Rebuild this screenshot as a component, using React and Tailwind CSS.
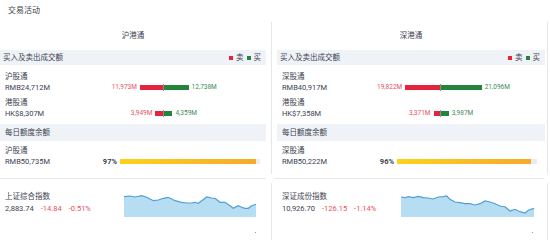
import React from 'react';

const leftLine = [[0,1.7],[6,1],[11,2],[17.7,0.7],[22.7,2.3],[29.3,5.7],[34.3,5],[39.3,3.3],[44.3,2.3],[47.7,4],[51,5.7],[57.7,7.3],[62.7,8],[67.7,8],[71,7.3],[74.3,8.3],[77.7,5.7],[82.7,2],[87.7,3],[91,3.3],[96,7.3],[101,7.3],[106,10.7],[109.3,13.3],[114.3,10.7],[117.7,12.3],[121,13.3],[124.3,13.3],[127.7,10.7],[132,9.3]];
const rightLine = [[0,2],[4,2.7],[7.3,1.7],[12.3,2.7],[17.3,1.3],[22.3,2.7],[27.3,3],[32.3,4],[37.3,2],[42.3,1.7],[45.7,1],[49,4.3],[54,7],[59,7.7],[64,8.7],[69,8.7],[74,10],[79,8.7],[84,6],[89,7],[94,8.7],[99,11],[104,11.7],[109,16],[114,14.3],[119,16.7],[124,18],[127.3,15.3],[133,13.3]];

const markets = [
    {
        name: '沪港通',
        north: { name: '沪股通', total: 'RMB24,712M', sell: 11973, buy: 12738 },
        south: { name: '港股通', total: 'HK$8,307M', sell: 3949, buy: 4359 },
        quota: { name: '沪股通', total: 'RMB50,735M', pct: 97 },
        index: { name: '上证综合指数', value: '2,883.74', change: '-14.84', pct: '-0.51%', line: leftLine },
    },
    {
        name: '深港通',
        north: { name: '深股通', total: 'RMB40,917M', sell: 19822, buy: 21096 },
        south: { name: '港股通', total: 'HK$7,358M', sell: 3371, buy: 3987 },
        quota: { name: '深股通', total: 'RMB50,222M', pct: 96 },
        index: { name: '深证成份指数', value: '10,926.70', change: '-126.15', pct: '-1.14%', line: rightLine },
    },
];

const fmt = n => n.toLocaleString('en-US') + 'M';

function Spark({ pts }) {
    const w = 133, h = 22;
    const d = pts.map((p, i) => (i ? 'L' : 'M') + p[0] + ' ' + p[1]).join(' ');
    return (
        <svg width={w} height={h} viewBox={`0 0 ${w} ${h}`} className="block">
            <path d={`${d} L${pts[pts.length - 1][0]} ${h} L0 ${h} Z`} fill="#b7ddf2" />
            <path d={d} fill="none" stroke="#4da0d8" strokeWidth="1.2" />
        </svg>
    );
}

function FlowRow({ item }) {
    return (
        <div className="flex">
            <div className="w-[100px] pl-[5px]">
                <div className="h-[11px] leading-[11px]">{item.name}</div>
                <div className="h-[11px] leading-[11px]">{item.total}</div>
            </div>
            <div className="flex-1 flex items-end">
                <div className="h-[11px] w-full flex items-center">
                    <div className="w-[63px] flex justify-end items-center">
                        <span className="text-[6.5px] text-[#e8505f] mr-[3px]">{fmt(item.sell)}</span>
                        <div className="h-[5px] bg-[#e5233d]" style={{ width: item.sell * 0.00193 }} />
                    </div>
                    <div className="w-px h-[7px] bg-[#8a8f98]" />
                    <div className="flex items-center">
                        <div className="h-[5px] bg-[#23853b]" style={{ width: item.buy * 0.00193 }} />
                        <span className="text-[6.5px] text-[#3f8a57] ml-[3px]">{fmt(item.buy)}</span>
                    </div>
                </div>
            </div>
        </div>
    );
}

function Market({ m, left }) {
    return (
        <div className={left ? 'w-[272px] flex flex-col' : 'w-[276px] flex flex-col'}>
            <div className={left ? 'h-[152px] pr-[5px] border-r border-[#e3e7ee]' : 'h-[152px] pl-[5px] pr-[2px] border-r border-[#e3e7ee]'}>
                <div className="h-[28px] flex items-center justify-center">{m.name}</div>
                <div className="h-[15px] bg-[#eff2f6] flex items-center justify-between pl-[3px] pr-[5px]">
                    <span>买入及卖出成交额</span>
                    <div className="flex items-center gap-[3px]">
                        <span className="w-[4px] h-[4px] bg-[#e5233d]" />
                        <span>卖</span>
                        <span className="w-[4px] h-[4px] bg-[#23853b]" />
                        <span>买</span>
                    </div>
                </div>
                <div className="pt-[6px] pb-[5px] flex flex-col gap-[4px]">
                    <FlowRow item={m.north} />
                    <FlowRow item={m.south} />
                </div>
                <div className="h-[17px] bg-[#eff2f6] flex items-center pl-[5px]">每日额度余额</div>
                <div className="pt-[4px] flex">
                    <div className="w-[100px] pl-[5px]">
                        <div className="h-[11px] leading-[11px]">{m.quota.name}</div>
                        <div className="h-[11px] leading-[11px]">{m.quota.total}</div>
                    </div>
                    <div className="flex items-end">
                        <div className="h-[11px] flex items-center">
                            <span className="w-[17px] text-right font-bold">{m.quota.pct}%</span>
                            <div className="ml-[3px] w-[140px] h-[5px] bg-[#ececec]">
                                <div className="h-full bg-gradient-to-r from-[#fcd21c] to-[#f6a92a]" style={{ width: m.quota.pct + '%' }} />
                            </div>
                        </div>
                    </div>
                </div>
            </div>
            <div className={left ? 'mt-[4px] mr-[6px] h-px bg-[#e3e7ee]' : 'mt-[4px] ml-[3px] mr-[4px] h-px bg-[#e3e7ee]'} />
            <div className={left ? 'mt-[4px] flex-1 pr-[5px] border-r border-[#e3e7ee] flex' : 'mt-[4px] flex-1 pl-[5px] pr-[2px] border-r border-[#e3e7ee] flex'}>
                <div className="w-[124px] pl-[5px] pt-[8px]">
                    <div className="h-[11px] leading-[11px]">{m.index.name}</div>
                    <div className="h-[13px] leading-[13px] flex gap-[7px]">
                        <span>{m.index.value}</span>
                        <span className="text-[#e8505b]">{m.index.change}</span>
                        <span className="text-[#e8505b]">{m.index.pct}</span>
                    </div>
                </div>
                <div className="flex flex-col">
                    <div className="mt-[12px]">
                        <Spark pts={m.index.line} />
                    </div>
                    <div className="mt-[15px] flex justify-end pr-[1px]">
                        <span className="w-px h-px bg-[#9aa0aa]" />
                    </div>
                </div>
            </div>
        </div>
    );
}

export default function App() {
    return (
        <div className="w-[550px] h-[240px] bg-white overflow-hidden flex flex-col text-[7.5px] text-[#3b4250] font-['Roboto','Noto_Sans_CJK_SC',sans-serif]">
            <div className="h-[22px] shrink-0 pl-[8px] flex items-center text-[8px] text-[#3a3f48]">交易活动</div>
            <div className="flex flex-1">
                {markets.map((m, i) => <Market key={m.name} m={m} left={i === 0} />)}
            </div>
        </div>
    );
}
